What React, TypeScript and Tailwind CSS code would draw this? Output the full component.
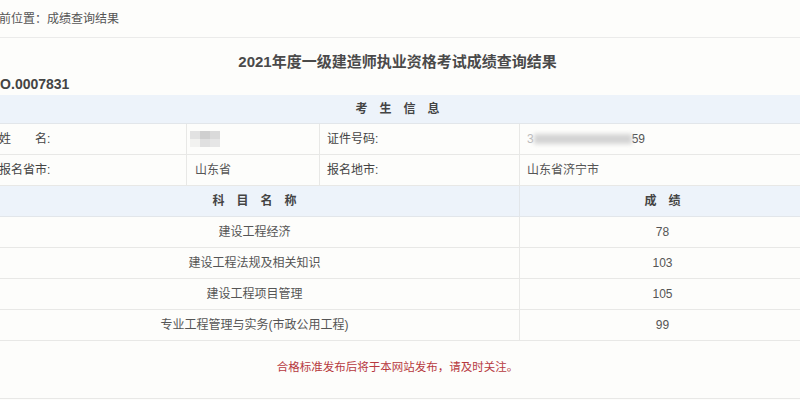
import React from "react";

const subjects = [
  { name: "建设工程经济", score: "78" },
  { name: "建设工程法规及相关知识", score: "103" },
  { name: "建设工程项目管理", score: "105" },
  { name: "专业工程管理与实务(市政公用工程)", score: "99" },
];

function Spaced({ chars }: { chars: string[] }) {
  return (
    <div className="flex items-center justify-center gap-[12px] font-bold text-[#444]">
      {chars.map((c) => (
        <span key={c}>{c}</span>
      ))}
    </div>
  );
}

export default function App() {
  return (
    <div
      className="w-[800px] h-[400px] overflow-hidden bg-[#fdfdfb] text-[12px] text-[#555]"
      style={{ fontFamily: '"Liberation Sans", "Noto Sans CJK SC", sans-serif' }}
    >
      <div className="-ml-[10px] w-[815px] h-[399px] border-b border-[#e8e8e6]">
        <div className="h-[38px] flex items-center border-b border-[#ebebea]">
          <span className="-ml-[3px]">当前位置：成绩查询结果</span>
        </div>

        <div className="mt-[12px] h-[24px] flex items-center justify-center text-[15px] font-bold text-[#4a4a4a]">
          2021年度一级建造师执业资格考试成绩查询结果
        </div>
        <div className="h-[20px] flex items-center text-[14px] font-bold text-[#444]">
          NO.0007831
        </div>

        <div className="mt-[1px]">
          <div className="h-[29px] flex items-center justify-center bg-[#edf3fa] border-b border-[#e2e6ea]">
            <Spaced chars={["考", "生", "信", "息"]} />
          </div>

          <div className="grid grid-cols-[197px_133px_200px_1fr]">
            <div className="h-[31px] flex items-center pl-[9px] border-b border-r border-[#e8e8e6] text-[#444]">
              <span>姓</span>
              <span className="ml-[24px]">名:</span>
            </div>
            <div className="h-[31px] flex items-center pl-[3px] border-b border-r border-[#e8e8e6]">
              <div className="flex flex-col">
                <div className="flex">
                  <div className="w-[10px] h-[8px] bg-[#e2e2e2]" />
                  <div className="w-[10px] h-[8px] bg-[#cfcfcf]" />
                  <div className="w-[10px] h-[8px] bg-[#dadada]" />
                </div>
                <div className="flex">
                  <div className="w-[10px] h-[8px] bg-[#f2f2f0]" />
                  <div className="w-[10px] h-[8px] bg-[#e0e0e0]" />
                  <div className="w-[10px] h-[8px] bg-[#e6e6e6]" />
                </div>
              </div>
            </div>
            <div className="h-[31px] flex items-center pl-[7px] border-b border-r border-[#e8e8e6] text-[#444]">
              证件号码:
            </div>
            <div className="h-[31px] flex items-center pl-[7px] border-b border-[#e8e8e6]">
              <span className="text-[#bbb]">3</span>
              <div className="w-[98px] h-[10px] bg-[#d4d4d4] blur-[2px]" />
              <span>59</span>
            </div>

            <div className="h-[31px] flex items-center pl-[9px] border-b border-r border-[#e8e8e6] text-[#444]">
              报名省市:
            </div>
            <div className="h-[31px] flex items-center pl-[8px] border-b border-r border-[#e8e8e6]">
              山东省
            </div>
            <div className="h-[31px] flex items-center pl-[7px] border-b border-r border-[#e8e8e6] text-[#444]">
              报名地市:
            </div>
            <div className="h-[31px] flex items-center pl-[7px] border-b border-[#e8e8e6]">
              山东省济宁市
            </div>
          </div>

          <div className="grid grid-cols-[530px_1fr]">
            <div className="h-[31px] flex items-center justify-center bg-[#edf3fa] border-b border-r border-[#e2e6ea]">
              <Spaced chars={["科", "目", "名", "称"]} />
            </div>
            <div className="h-[31px] flex items-center justify-center bg-[#edf3fa] border-b border-[#e2e6ea]">
              <Spaced chars={["成", "绩"]} />
            </div>
            {subjects.map((s) => (
              <React.Fragment key={s.name}>
                <div className="h-[31px] flex items-center justify-center border-b border-r border-[#e8e8e6]">
                  {s.name}
                </div>
                <div className="h-[31px] flex items-center justify-center border-b border-[#e8e8e6]">
                  {s.score}
                </div>
              </React.Fragment>
            ))}
          </div>
        </div>

        <div className="mt-[18px] h-[18px] flex items-center justify-center text-[11.5px] text-[#b73a3f]">
          合格标准发布后将于本网站发布，请及时关注。
        </div>
      </div>
    </div>
  );
}
